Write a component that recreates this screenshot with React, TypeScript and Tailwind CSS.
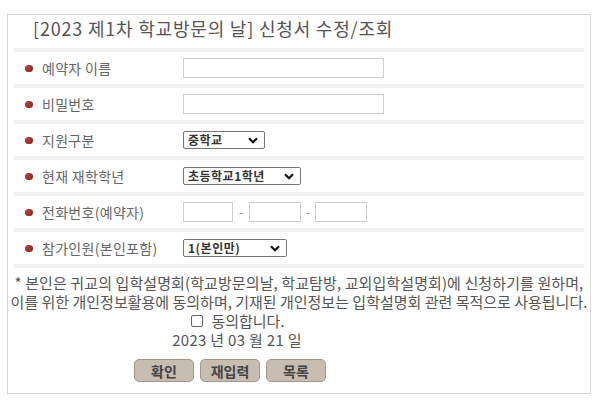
import React from 'react';

const font = { fontFamily: '"Noto Sans CJK KR", "Noto Sans", sans-serif' };

const Bullet = () => (
    <span className="inline-block w-[8px] h-[7px] rounded-full bg-[radial-gradient(circle_at_40%_35%,#b5443c,#7a1f1b)] mr-[9px]" />
);

const Chevron = () => (
    <svg width="10" height="7" viewBox="0 0 10 7" className="shrink-0">
        <path d="M1 1.2 L5 5.2 L9 1.2" fill="none" stroke="#111" strokeWidth="2.2" />
    </svg>
);

const FakeSelect = ({ value, width }: { value: string; width: string }) => (
    <div className={`${width} h-[18px] border border-[#767676] rounded-[2px] bg-white flex items-center justify-between pl-[4px] pr-[6px]`}>
        <span className="text-[12px] font-semibold tracking-[0.5px] text-[#333] leading-none">{value}</span>
        <Chevron />
    </div>
);

const TextBox = ({ width }: { width: string }) => (
    <div className={`${width} h-[20px] border border-[#cfcfcf] bg-white`} />
);

const Row = ({ label, children }: { label: string; children: React.ReactNode }) => (
    <div>
        <div className="h-[4px] bg-[#f1f1f1] mx-[6px]" />
        <div className="h-[32px] flex items-center">
            <div className="w-[175px] pl-[17px] flex items-center text-[14px] tracking-[0.3px] text-[#666]">
                <Bullet />
                {label}
            </div>
            {children}
        </div>
    </div>
);

export default function App() {
    return (
        <div className="w-[598px] h-[406px] bg-white pt-[14px] px-[7px]" style={font}>
            <div className="h-[380px] border border-[#d9d9d9] flex flex-col">
                <div className="h-[33px] flex items-center pl-[25px] pb-[7px] text-[18px] tracking-[0.8px] text-[#555]">
                    [2023 제1차 학교방문의 날] 신청서 수정/조회
                </div>

                <Row label="예약자 이름">
                    <TextBox width="w-[201px]" />
                </Row>
                <Row label="비밀번호">
                    <TextBox width="w-[201px]" />
                </Row>
                <Row label="지원구분">
                    <FakeSelect value="중학교" width="w-[82px]" />
                </Row>
                <Row label="현재 재학학년">
                    <FakeSelect value="초등학교1학년" width="w-[118px]" />
                </Row>
                <Row label="전화번호(예약자)">
                    <div className="flex items-center text-[12px] text-[#888]">
                        <TextBox width="w-[50px]" />
                        <span className="w-[16px] text-center">-</span>
                        <TextBox width="w-[52px]" />
                        <span className="w-[14px] text-center">-</span>
                        <TextBox width="w-[52px]" />
                    </div>
                </Row>
                <Row label="참가인원(본인포함)">
                    <FakeSelect value="1(본인만)" width="w-[104px]" />
                </Row>
                <div className="h-[4px] bg-[#f1f1f1] mx-[6px]" />

                <div className="mt-[5px] flex flex-col items-center text-[15px] leading-[19px] text-[#555] whitespace-nowrap">
                    <p className="tracking-[0.1px]">* 본인은 귀교의 입학설명회(학교방문의날, 학교탐방, 교외입학설명회)에 신청하기를 원하며,</p>
                    <p>이를 위한 개인정보활용에 동의하며, 기재된 개인정보는 입학설명회 관련 목적으로 사용됩니다.</p>
                </div>
                <div className="flex justify-center pr-[122px] items-center h-[19px] text-[15px] leading-[19px] text-[#555]">
                    <span className="w-[12px] h-[12px] border border-[#666] rounded-[2px] mr-[8px]" />
                    <span>동의합니다.</span>
                </div>
                <div className="flex justify-center pr-[124px] h-[20px] items-center text-[15px] leading-[20px] tracking-[0.3px] text-[#555]">
                    2023 년 03 월 21 일
                </div>
                <div className="flex justify-center gap-[6px] pr-[138px] mt-[9px]">
                    {['확인', '재입력', '목록'].map((t) => (
                        <button
                            key={t}
                            className="h-[23px] w-[60px] rounded-[5px] bg-[#c7bdb1] border border-[#a39789] text-[14px] font-bold text-[#444] leading-none"
                        >
                            {t}
                        </button>
                    ))}
                </div>
            </div>
        </div>
    );
}
